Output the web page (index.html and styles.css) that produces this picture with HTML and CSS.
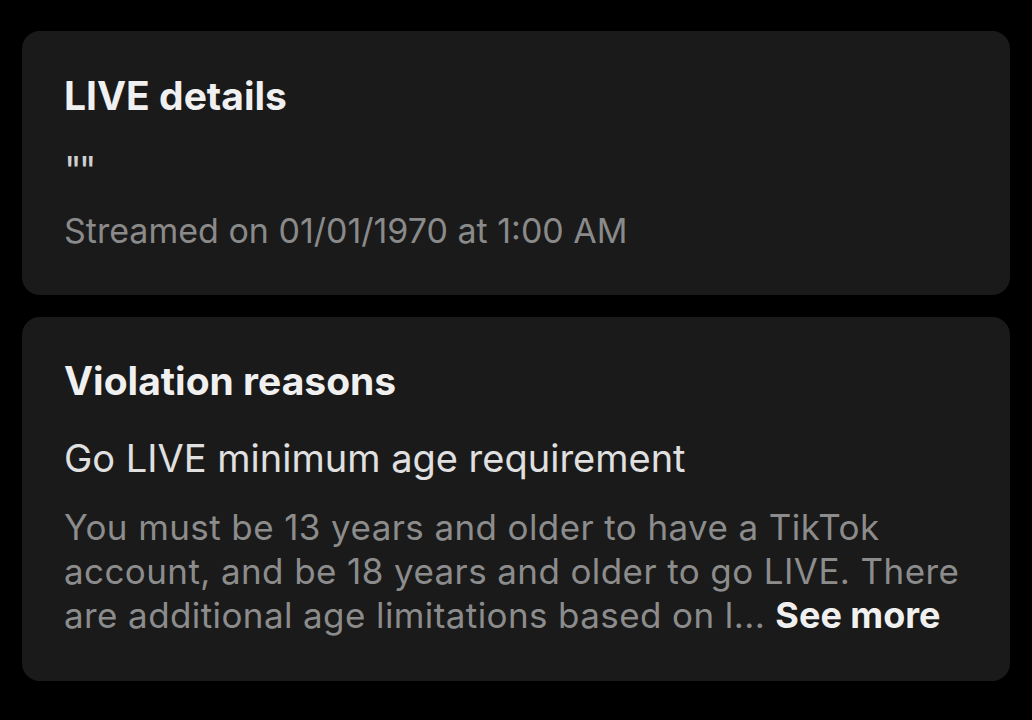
FILE: index.html
```html
<!DOCTYPE html>
<html>
<head>
<meta charset="utf-8">
<link rel="stylesheet" href="styles.css">
</head>
<body>
<main class="page">
  <section class="card card-live">
    <h2 class="card-title">LIVE details</h2>
    <p class="live-title">""</p>
    <p class="meta">Streamed on 01/01/1970 at 1:00 AM</p>
  </section>
  <section class="card card-violation">
    <h2 class="card-title">Violation reasons</h2>
    <p class="reason">Go LIVE minimum age requirement</p>
    <p class="desc">You must be 13 years and older to have a TikTok account, and be 18 years and older to go LIVE. There are additional age limitations based on l... <span class="see-more">See more</span></p>
  </section>
</main>
</body>
</html>
```
FILE: styles.css
```css
html, body {
  margin: 0;
  padding: 0;
  background: #000;
}
body {
  font-family: Inter, Roboto, "Liberation Sans", sans-serif;
  -webkit-font-smoothing: antialiased;
}
.page {
  display: flex;
  flex-direction: column;
  gap: 22px;
  padding: 31px 22px 0 22px;
}
.card {
  background: #1a1a1a;
  border-radius: 18px;
  padding: 0 42px;
  box-sizing: border-box;
}
.card-live {
  height: 264px;
  padding-top: 40px;
}
.card-violation {
  height: 364px;
  padding-top: 39px;
}
.card-title {
  margin: 0;
  color: #f0f0f0;
  font-size: 39px;
  font-weight: 700;
  line-height: 50px;
}
.live-title {
  margin: 27px 0 0;
  color: #cfcfcf;
  font-size: 38px;
  letter-spacing: -3px;
  line-height: 44px;
}
.meta {
  margin: 17px 0 0;
  color: #8a8a8a;
  font-size: 34px;
  line-height: 44px;
}
.reason {
  margin: 28px 0 0;
  color: #e0e0e0;
  font-size: 38px;
  line-height: 48px;
}
.desc {
  margin: 23px 0 0;
  color: #8c8c8c;
  font-size: 35px;
  letter-spacing: 0.4px;
  line-height: 44px;
}
.see-more {
  color: #f0f0f0;
  font-weight: 700;
  font-size: 36px;
  letter-spacing: 0;
}
```
